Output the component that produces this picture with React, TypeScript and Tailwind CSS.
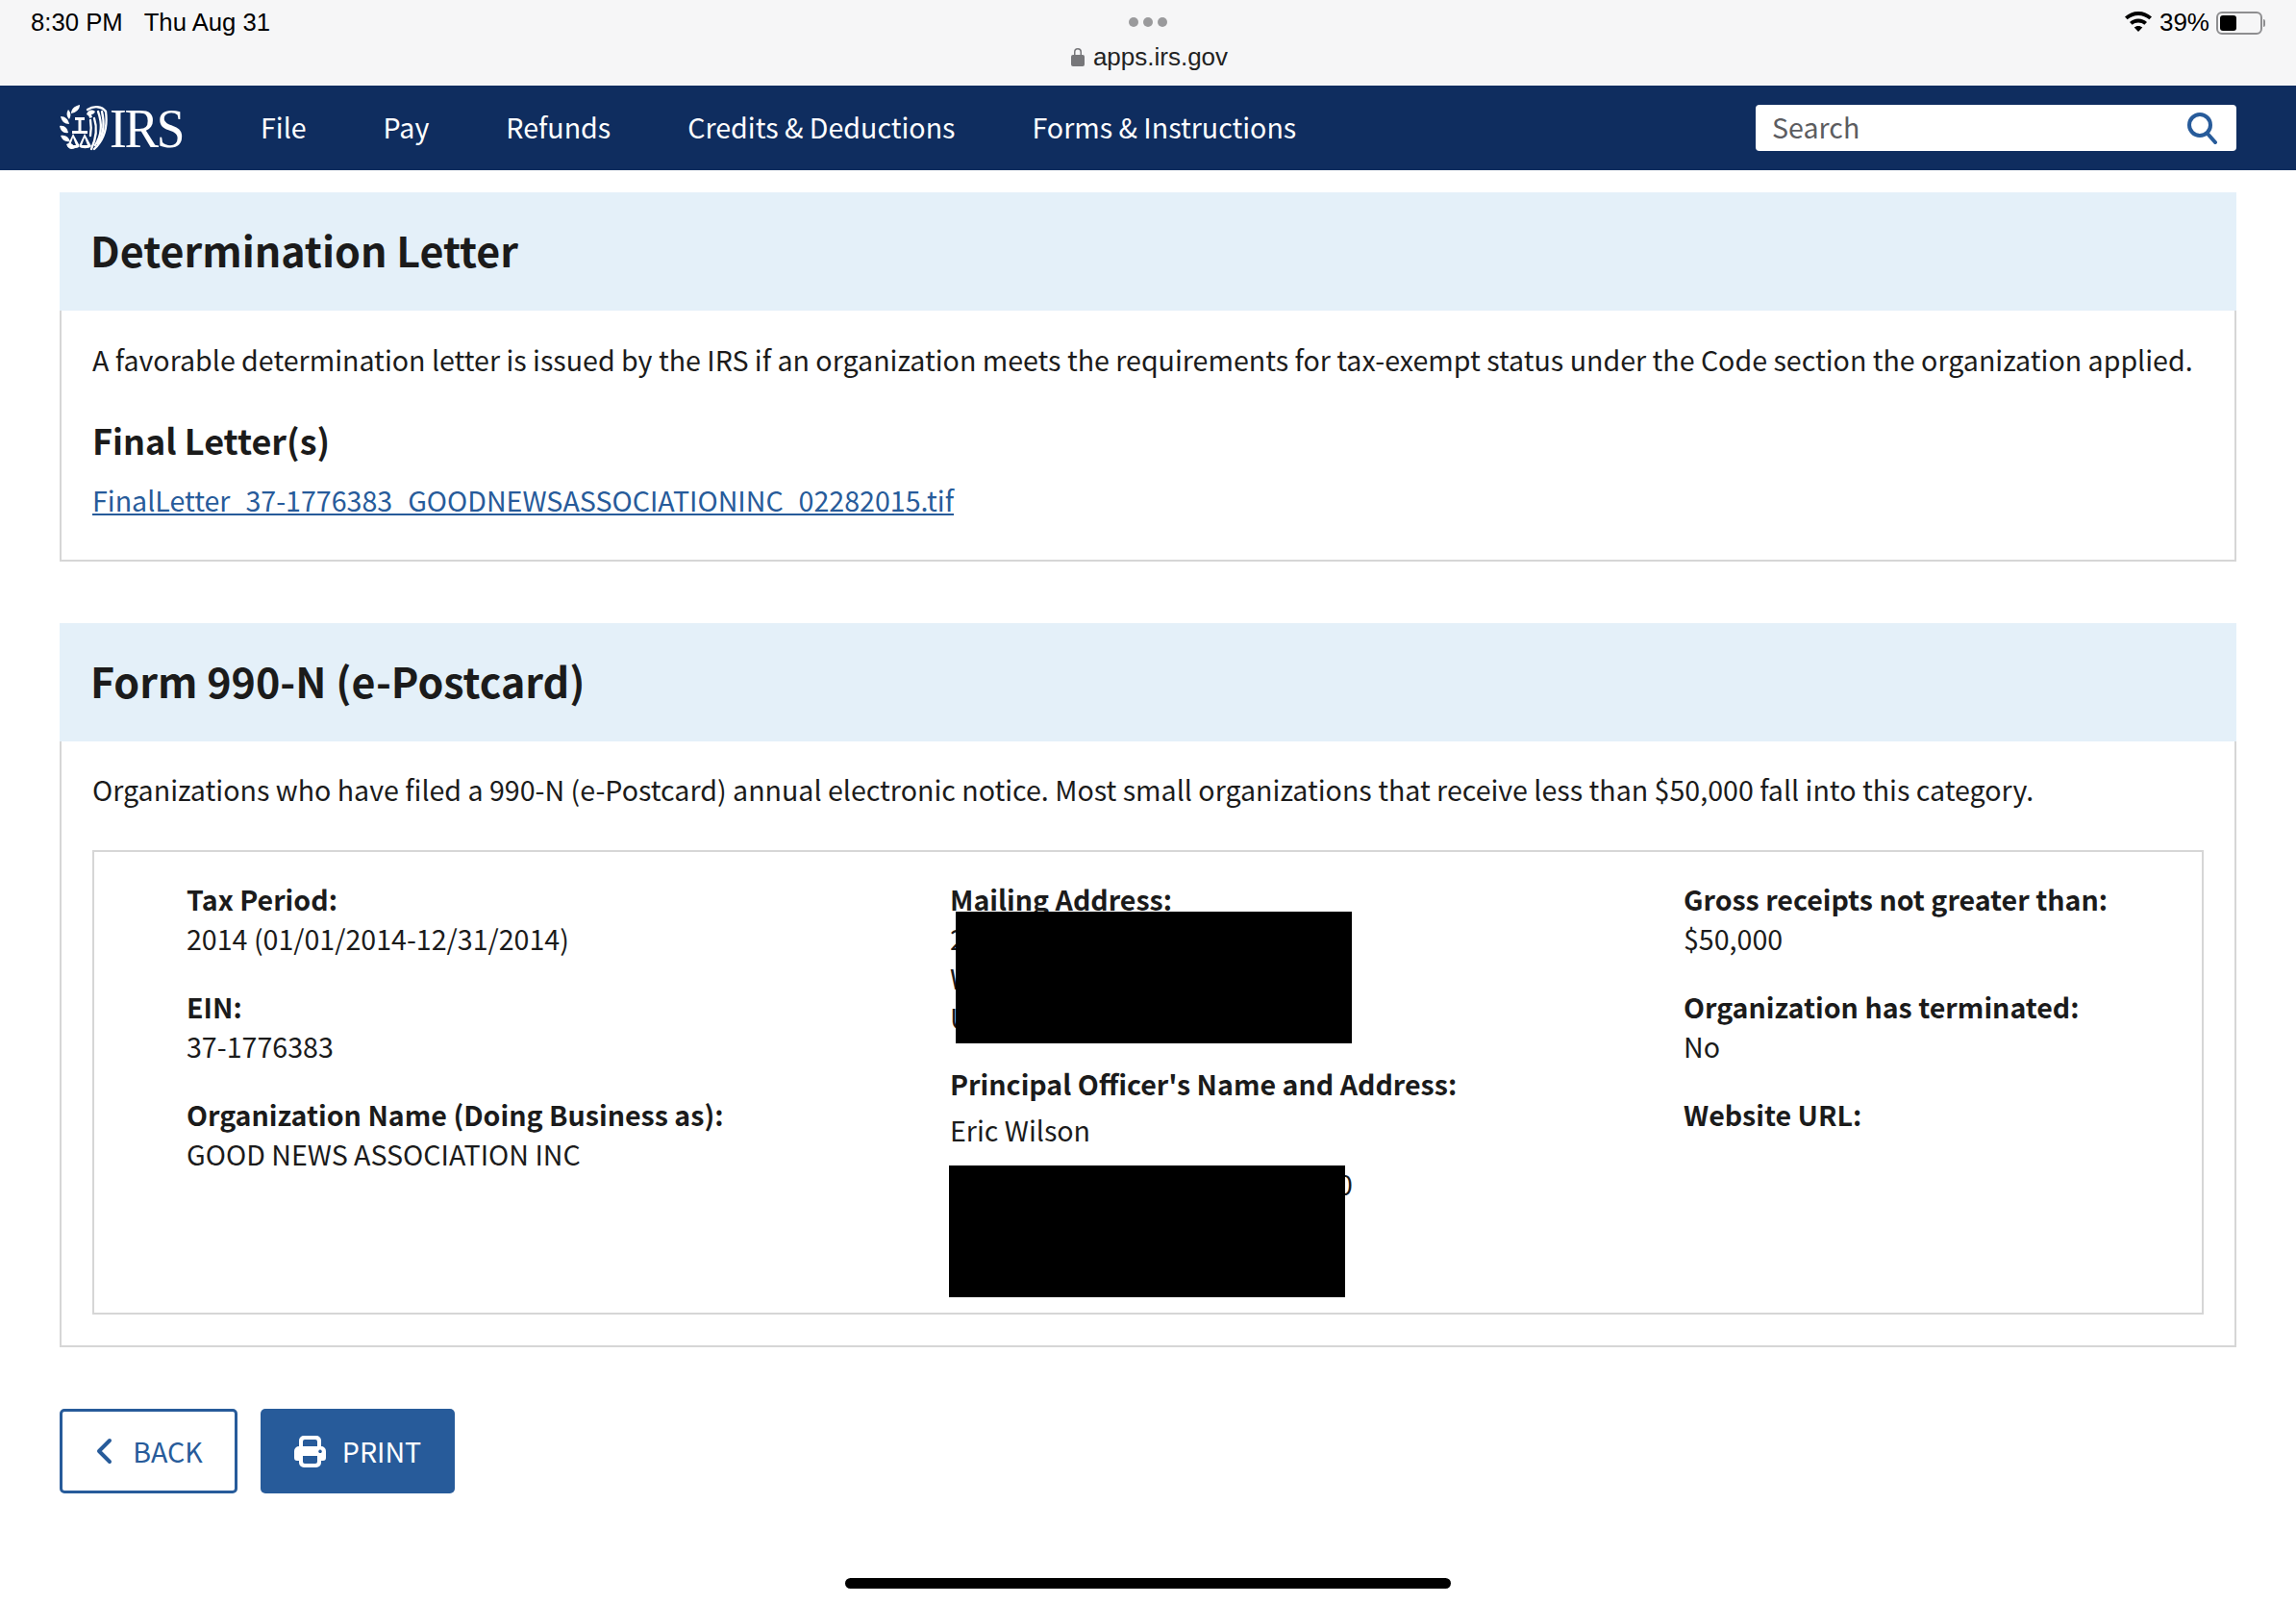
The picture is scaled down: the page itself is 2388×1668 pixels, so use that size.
import React from "react";

const body = "font-['Noto_Sans_CJK_SC','Source_Sans_Pro','Noto_Sans',sans-serif]";

function Seal() {
  return (
    <svg width="50" height="48" viewBox="0 0 50 48" fill="none" className="shrink-0">
      <g fill="#fff">
        <path d="M21 0c0 5-4 8-9 9 0-5 4-8 9-9zM9 5c3 3 3 7 1 10-3-3-3-7-1-10zM1 12c5 0 8 3 9 8-5 0-8-3-9-8zM0 22c5-1 8 2 9 7-5 1-8-2-9-7zM1 32c5-1 8 1 10 6-5 1-8-1-10-6zM7 41c4-2 7-1 9 4-4 2-7 1-9-4z" />
        <path fillRule="evenodd" d="M14 30l-6 13c2 3 11 3 13 0zM14 34l-3 8h6zM26 30l-6 13c2 3 11 3 13 0zM26 34l-3 8h6z" />
        <path d="M16 13h10v3h-3.500v11H29v3H13v-3h6.500V16H16z" />
        <path d="M28 10c1-4 5-6 9-3-1 2-2 3-4 3l1 3-3 1c0-2-1-3-3-4z" />
      </g>
      <g stroke="#fff" strokeWidth="2.300" strokeLinecap="round">
        <path d="M29 5C35 1 44 1 48 7" />
        <path d="M48 7c2 15 0 28-12 39" />
        <path d="M36 14c3 9 2 21-3 32" />
        <path d="M40 7c4 11 4 24-3 35" />
        <path d="M44 7c3 12 2 23-4 33" />
        <path d="M32 16c1 6 1 11 0 16" />
      </g>
    </svg>
  );
}

function Info({ label, value }: { label: string; value?: string }) {
  return (
    <div className="mb-[30px]">
      <div className="font-bold leading-[41px] text-[#1b1b1b]">{label}</div>
      {value && <div className="leading-[41px] text-[#1b1b1b]">{value}</div>}
    </div>
  );
}

function Card({ title, children }: { title: string; children: React.ReactNode }) {
  return (
    <section className="border-2 border-[#d6d6d6]">
      <h2 className="h-[123px] bg-[#e4f0f9] pl-[32px] pb-[4px] flex items-center text-[43px] leading-none font-bold text-[#1b1b1b] -mx-[2px] -mt-[2px]">
        {title}
      </h2>
      {children}
    </section>
  );
}

export default function App() {
  return (
    <div className={`w-[2388px] h-[1668px] bg-white overflow-hidden flex flex-col ${body}`}>
      <div className="h-[89px] bg-[#f6f6f7] grid grid-cols-3 px-[32px] font-['Liberation_Sans',sans-serif] text-[26px] text-black">
        <div className="flex gap-[22px] pt-[9px] leading-[28px] text-[25.700px]">
          <span>8:30 PM</span>
          <span>Thu Aug 31</span>
        </div>
        <div className="flex flex-col items-center pt-[18px] pl-[3px]">
          <div className="flex gap-[5px] -ml-[3px]">
            <span className="w-[10px] h-[10px] rounded-full bg-[#9a9a9c]" />
            <span className="w-[10px] h-[10px] rounded-full bg-[#9a9a9c]" />
            <span className="w-[10px] h-[10px] rounded-full bg-[#9a9a9c]" />
          </div>
          <div className="flex items-center gap-[9px] mt-[17px] leading-[28px] text-[#222]">
            <svg width="14" height="20" viewBox="0 0 14 20" fill="#77777a">
              <rect x="0" y="8" width="14" height="12" rx="2" />
              <path d="M3 9V5a4 4 0 0 1 8 0v4H9.500V5a2.500 2.500 0 0 0-5 0v4z" />
            </svg>
            <span>apps.irs.gov</span>
          </div>
        </div>
        <div className="flex justify-end items-start gap-[8px] pt-[9px] leading-[28px]">
          <svg width="28" height="21" viewBox="0 0 28 21" fill="#000" className="mt-[3px]">
            <path d="M14 0c5.500 0 10 2 14 5.500l-2.600 2.800C22.200 5.600 18.300 4 14 4S5.800 5.600 2.600 8.300L0 5.500C4 2 8.500 0 14 0z" />
            <path d="M14 7.500c3.500 0 6.500 1.300 9 3.400l-2.700 2.800C18.500 12.200 16.400 11.400 14 11.400s-4.500.8-6.300 2.300L5 10.900c2.500-2.100 5.500-3.400 9-3.400z" />
            <path d="M14 15c1.700 0 3.100.6 4.300 1.500L14 21l-4.300-4.500C10.900 15.600 12.300 15 14 15z" />
          </svg>
          <span>39%</span>
          <div className="mt-[3px] flex items-center -ml-[1px]">
            <div className="w-[48px] h-[24px] rounded-[6px] border-2 border-[#8e8e90] p-[2px]">
              <div className="w-[17px] h-full rounded-[3px] bg-black" />
            </div>
            <div className="w-[2px] h-[8px] rounded-r bg-[#8e8e90] ml-[1px]" />
          </div>
        </div>
      </div>

      <nav className="h-[88px] bg-[#0f2d5f] flex items-center pl-[62px] pr-[62px] text-white text-[28.600px]">
        <div className="flex items-center w-[209px]">
          <Seal />
          <span className="font-['Liberation_Serif',serif] text-[58px] leading-none tracking-[-2.500px] origin-left scale-x-[0.92] ml-[2px] mt-[2px]">IRS</span>
        </div>
        <div className="flex gap-[80px] leading-none -mt-[2px]">
          <span>File</span>
          <span>Pay</span>
          <span>Refunds</span>
          <span>Credits &amp; Deductions</span>
          <span>Forms &amp; Instructions</span>
        </div>
        <div className="ml-auto w-[500px] h-[48px] bg-white rounded-[4px] flex items-center justify-between pl-[17px] pr-[18px] text-[#5c5c60]">
          <span className="-mt-[2px]">Search</span>
          <svg width="34" height="34" viewBox="0 0 34 34" fill="none" stroke="#275b9a" strokeWidth="4" strokeLinecap="round">
            <circle cx="14" cy="14" r="11" />
            <path d="M22 23l8 9" />
          </svg>
        </div>
      </nav>

      <main className="px-[62px] pt-[23px] text-[28.600px] text-[#1b1b1b]">
        <Card title="Determination Letter">
          <div className="h-[259px] px-[32px] pt-[30px]">
            <p className="leading-[41px]">
              A favorable determination letter is issued by the IRS if an organization meets the requirements for tax-exempt status under the Code section the organization applied.
            </p>
            <h3 className="mt-[39px] text-[36px] leading-[48px] font-bold">Final Letter(s)</h3>
            <a className="block mt-[18px] leading-[41px] text-[#275b9a] underline">
              FinalLetter_37-1776383_GOODNEWSASSOCIATIONINC_02282015.tif
            </a>
          </div>
        </Card>

        <div className="mt-[64px]">
          <Card title="Form 990-N (e-Postcard)">
            <div className="h-[628px] px-[32px] pt-[29px]">
              <p className="leading-[41px]">
                Organizations who have filed a 990-N (e-Postcard) annual electronic notice. Most small organizations that receive less than $50,000 fall into this category.
              </p>
              <div className="mt-[43px] h-[483px] border-2 border-[#d6d6d6] grid grid-cols-[794px_763px_1fr] pl-[96px] pt-[28px]">
                <div>
                  <Info label="Tax Period:" value="2014 (01/01/2014-12/31/2014)" />
                  <Info label="EIN:" value="37-1776383" />
                  <Info label="Organization Name (Doing Business as):" value="GOOD NEWS ASSOCIATION INC" />
                </div>
                <div className="relative">
                  <div className="font-bold leading-[41px]">Mailing Address:</div>
                  <div className="leading-[41px]">2</div>
                  <div className="leading-[41px]">W</div>
                  <div className="leading-[41px]">U</div>
                  <div className="font-bold leading-[41px] mt-[28px]">Principal Officer's Name and Address:</div>
                  <div className="leading-[41px] mt-[7px]">Eric Wilson</div>
                  <div className="leading-[41px] mt-[15px] pl-[403px]">0</div>
                  <div className="absolute left-[6px] top-[34px] w-[412px] h-[137px] bg-black" />
                  <div className="absolute -left-px top-[298px] w-[412px] h-[137px] bg-black" />
                </div>
                <div>
                  <Info label="Gross receipts not greater than:" value="$50,000" />
                  <Info label="Organization has terminated:" value="No" />
                  <Info label="Website URL:" />
                </div>
              </div>
            </div>
          </Card>
        </div>

        <div className="mt-[64px] flex gap-[24px]">
          <button className="w-[185px] h-[88px] rounded-[5px] border-[3px] border-[#275b9a] text-[#275b9a] flex items-center justify-center gap-[20px]">
            <svg width="20" height="30" viewBox="0 0 20 30" fill="none" stroke="#275b9a" strokeWidth="4" strokeLinecap="round" strokeLinejoin="round">
              <path d="M16 4L5 15l11 11" />
            </svg>
            BACK
          </button>
          <button className="w-[202px] h-[88px] rounded-[5px] bg-[#275b9a] text-white flex items-center justify-center gap-[17px]">
            <svg width="33" height="33" viewBox="0 0 33 33" fill="#fff">
              <path fillRule="evenodd" d="M5 5a5 5 0 0 1 5-5h13a5 5 0 0 1 5 5v6a5 5 0 0 1 5 5v7a3 3 0 0 1-3 3h-2v2a5 5 0 0 1-5 5H10a5 5 0 0 1-5-5v-2H3a3 3 0 0 1-3-3v-7a5 5 0 0 1 5-5zm4 6h15V6a2 2 0 0 0-2-2H11a2 2 0 0 0-2 2zM9 21v6a2 2 0 0 0 2 2h11a2 2 0 0 0 2-2v-6zM27 14.500a1.800 1.800 0 1 0 .01 0z" />
            </svg>
            PRINT
          </button>
        </div>
      </main>

      <div className="mt-auto mb-[16px] mx-auto w-[630px] h-[11px] rounded-full bg-black" />
    </div>
  );
}
